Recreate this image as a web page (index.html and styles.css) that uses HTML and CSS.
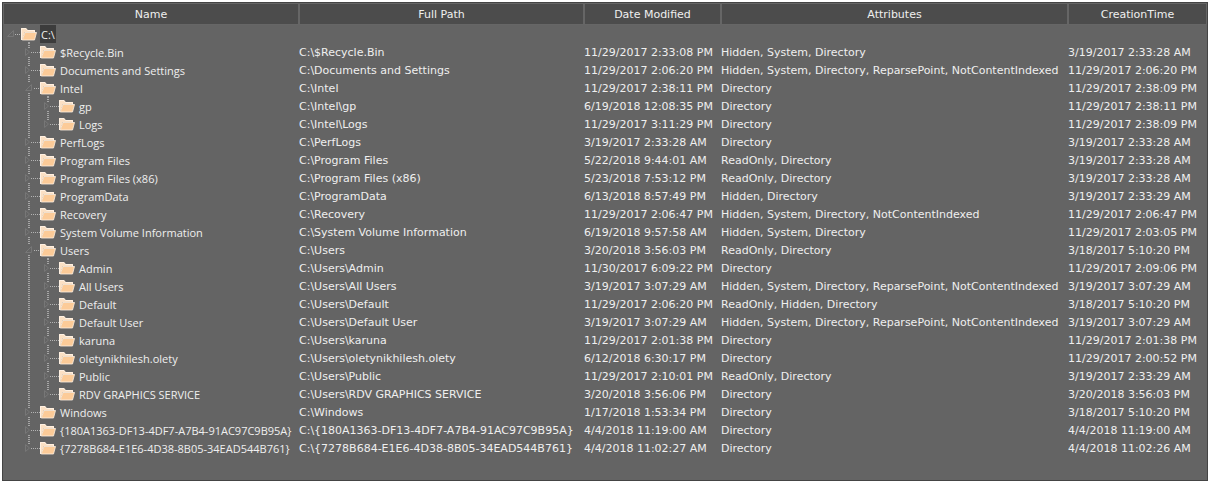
FILE: index.html
```html
<!DOCTYPE html>
<html lang="en">
<head>
<meta charset="utf-8">
<title>C:\</title>
<link rel="stylesheet" href="styles.css">
</head>
<body>
<svg class="sprites" aria-hidden="true">
  <symbol id="folder" viewBox="0 0 17 18">
    <path d="M0 3h5l1.500 2H14v2H4L1 15H0z" fill="#fbe0c4"/>
    <path d="M.5 15V3.500H5L6.500 5.500H13.500V7.500" fill="none" stroke="#fff1e2"/>
    <path d="M4 7.500H15.500L13.500 15H1.200z" fill="#fccb98" stroke="#fff1e2" stroke-width=".8"/>
  </symbol>
  <symbol id="stem" viewBox="0 0 17 18">
    <path d="M7 17.500h2" stroke="#a6a6a6"/>
  </symbol>
  <symbol id="root" viewBox="0 0 18 18">
    <path d="M4.500 11.500h6v-6z" fill="none" stroke="#777"/>
    <path d="M12 9.500h6" stroke="#b4b4b4" stroke-dasharray="1 1"/>
  </symbol>
  <symbol id="line" viewBox="0 0 19 18">
    <path d="M8 0v18" stroke="#a6a6a6" stroke-width="2" stroke-dasharray="1 1"/>
  </symbol>
  <symbol id="closed" viewBox="0 0 19 18">
    <path d="M8 0v5M8 14v4" stroke="#a6a6a6" stroke-width="2" stroke-dasharray="1 1"/>
    <path d="M4.500 5.500v7l4-3.500z" fill="none" stroke="#777"/>
    <path d="M10 9.500h9" stroke="#b4b4b4" stroke-dasharray="1 1"/>
  </symbol>
  <symbol id="last" viewBox="0 0 19 18">
    <path d="M8 0v5" stroke="#a6a6a6" stroke-width="2" stroke-dasharray="1 1"/>
    <path d="M4.500 5.500v7l4-3.500z" fill="none" stroke="#777"/>
    <path d="M10 9.500h9" stroke="#b4b4b4" stroke-dasharray="1 1"/>
  </symbol>
  <symbol id="open" viewBox="0 0 19 18">
    <path d="M8 0v4M8 14v4" stroke="#a6a6a6" stroke-width="2" stroke-dasharray="1 1"/>
    <path d="M4.500 11.500h6v-6z" fill="none" stroke="#777"/>
    <path d="M13 9.500h6" stroke="#b4b4b4" stroke-dasharray="1 1"/>
  </symbol>
</svg>
<main class="panel">
<table class="files">
<colgroup><col class="col-name"><col class="col-path"><col class="col-date"><col><col class="col-created"></colgroup>
<thead><tr><th scope="col">Name</th><th scope="col">Full Path</th><th scope="col">Date Modified</th><th scope="col">Attributes</th><th scope="col">CreationTime</th></tr></thead>
<tbody>
<tr><td><div class="node"><button class="toggle root" aria-label="Collapse C:\" aria-expanded="true"><svg><use href="#root"/></svg></button><svg class="folder"><use href="#folder"/><use href="#stem"/></svg><span class="label selected">C:\</span></div></td><td></td><td></td><td></td><td></td></tr>
<tr><td><div class="node child"><button class="toggle" aria-label="Expand $Recycle.Bin"><svg><use href="#closed"/></svg></button><svg class="folder"><use href="#folder"/></svg><span class="label">$Recycle.Bin</span></div></td><td>C:\$Recycle.Bin</td><td>11/29/2017 2:33:08 PM</td><td>Hidden, System, Directory</td><td>3/19/2017 2:33:28 AM</td></tr>
<tr><td><div class="node child"><button class="toggle" aria-label="Expand Documents and Settings"><svg><use href="#closed"/></svg></button><svg class="folder"><use href="#folder"/></svg><span class="label">Documents and Settings</span></div></td><td>C:\Documents and Settings</td><td>11/29/2017 2:06:20 PM</td><td>Hidden, System, Directory, ReparsePoint, NotContentIndexed</td><td>11/29/2017 2:06:20 PM</td></tr>
<tr><td><div class="node child"><button class="toggle" aria-label="Collapse Intel" aria-expanded="true"><svg><use href="#open"/></svg></button><svg class="folder"><use href="#folder"/><use href="#stem"/></svg><span class="label">Intel</span></div></td><td>C:\Intel</td><td>11/29/2017 2:38:11 PM</td><td>Directory</td><td>11/29/2017 2:38:09 PM</td></tr>
<tr><td><div class="node child"><svg class="guide"><use href="#line"/></svg><button class="toggle" aria-label="Expand gp"><svg><use href="#closed"/></svg></button><svg class="folder"><use href="#folder"/></svg><span class="label">gp</span></div></td><td>C:\Intel\gp</td><td>6/19/2018 12:08:35 PM</td><td>Directory</td><td>11/29/2017 2:38:11 PM</td></tr>
<tr><td><div class="node child"><svg class="guide"><use href="#line"/></svg><button class="toggle" aria-label="Expand Logs"><svg><use href="#last"/></svg></button><svg class="folder"><use href="#folder"/></svg><span class="label">Logs</span></div></td><td>C:\Intel\Logs</td><td>11/29/2017 3:11:29 PM</td><td>Directory</td><td>11/29/2017 2:38:09 PM</td></tr>
<tr><td><div class="node child"><button class="toggle" aria-label="Expand PerfLogs"><svg><use href="#closed"/></svg></button><svg class="folder"><use href="#folder"/></svg><span class="label">PerfLogs</span></div></td><td>C:\PerfLogs</td><td>3/19/2017 2:33:28 AM</td><td>Directory</td><td>3/19/2017 2:33:28 AM</td></tr>
<tr><td><div class="node child"><button class="toggle" aria-label="Expand Program Files"><svg><use href="#closed"/></svg></button><svg class="folder"><use href="#folder"/></svg><span class="label">Program Files</span></div></td><td>C:\Program Files</td><td>5/22/2018 9:44:01 AM</td><td>ReadOnly, Directory</td><td>3/19/2017 2:33:28 AM</td></tr>
<tr><td><div class="node child"><button class="toggle" aria-label="Expand Program Files (x86)"><svg><use href="#closed"/></svg></button><svg class="folder"><use href="#folder"/></svg><span class="label">Program Files (x86)</span></div></td><td>C:\Program Files (x86)</td><td>5/23/2018 7:53:12 PM</td><td>ReadOnly, Directory</td><td>3/19/2017 2:33:28 AM</td></tr>
<tr><td><div class="node child"><button class="toggle" aria-label="Expand ProgramData"><svg><use href="#closed"/></svg></button><svg class="folder"><use href="#folder"/></svg><span class="label">ProgramData</span></div></td><td>C:\ProgramData</td><td>6/13/2018 8:57:49 PM</td><td>Hidden, Directory</td><td>3/19/2017 2:33:29 AM</td></tr>
<tr><td><div class="node child"><button class="toggle" aria-label="Expand Recovery"><svg><use href="#closed"/></svg></button><svg class="folder"><use href="#folder"/></svg><span class="label">Recovery</span></div></td><td>C:\Recovery</td><td>11/29/2017 2:06:47 PM</td><td>Hidden, System, Directory, NotContentIndexed</td><td>11/29/2017 2:06:47 PM</td></tr>
<tr><td><div class="node child"><button class="toggle" aria-label="Expand System Volume Information"><svg><use href="#closed"/></svg></button><svg class="folder"><use href="#folder"/></svg><span class="label">System Volume Information</span></div></td><td>C:\System Volume Information</td><td>6/19/2018 9:57:58 AM</td><td>Hidden, System, Directory</td><td>11/29/2017 2:03:05 PM</td></tr>
<tr><td><div class="node child"><button class="toggle" aria-label="Collapse Users" aria-expanded="true"><svg><use href="#open"/></svg></button><svg class="folder"><use href="#folder"/><use href="#stem"/></svg><span class="label">Users</span></div></td><td>C:\Users</td><td>3/20/2018 3:56:03 PM</td><td>ReadOnly, Directory</td><td>3/18/2017 5:10:20 PM</td></tr>
<tr><td><div class="node child"><svg class="guide"><use href="#line"/></svg><button class="toggle" aria-label="Expand Admin"><svg><use href="#closed"/></svg></button><svg class="folder"><use href="#folder"/></svg><span class="label">Admin</span></div></td><td>C:\Users\Admin</td><td>11/30/2017 6:09:22 PM</td><td>Directory</td><td>11/29/2017 2:09:06 PM</td></tr>
<tr><td><div class="node child"><svg class="guide"><use href="#line"/></svg><button class="toggle" aria-label="Expand All Users"><svg><use href="#closed"/></svg></button><svg class="folder"><use href="#folder"/></svg><span class="label">All Users</span></div></td><td>C:\Users\All Users</td><td>3/19/2017 3:07:29 AM</td><td>Hidden, System, Directory, ReparsePoint, NotContentIndexed</td><td>3/19/2017 3:07:29 AM</td></tr>
<tr><td><div class="node child"><svg class="guide"><use href="#line"/></svg><button class="toggle" aria-label="Expand Default"><svg><use href="#closed"/></svg></button><svg class="folder"><use href="#folder"/></svg><span class="label">Default</span></div></td><td>C:\Users\Default</td><td>11/29/2017 2:06:20 PM</td><td>ReadOnly, Hidden, Directory</td><td>3/18/2017 5:10:20 PM</td></tr>
<tr><td><div class="node child"><svg class="guide"><use href="#line"/></svg><button class="toggle" aria-label="Expand Default User"><svg><use href="#closed"/></svg></button><svg class="folder"><use href="#folder"/></svg><span class="label">Default User</span></div></td><td>C:\Users\Default User</td><td>3/19/2017 3:07:29 AM</td><td>Hidden, System, Directory, ReparsePoint, NotContentIndexed</td><td>3/19/2017 3:07:29 AM</td></tr>
<tr><td><div class="node child"><svg class="guide"><use href="#line"/></svg><button class="toggle" aria-label="Expand karuna"><svg><use href="#closed"/></svg></button><svg class="folder"><use href="#folder"/></svg><span class="label">karuna</span></div></td><td>C:\Users\karuna</td><td>11/29/2017 2:01:38 PM</td><td>Directory</td><td>11/29/2017 2:01:38 PM</td></tr>
<tr><td><div class="node child"><svg class="guide"><use href="#line"/></svg><button class="toggle" aria-label="Expand oletynikhilesh.olety"><svg><use href="#closed"/></svg></button><svg class="folder"><use href="#folder"/></svg><span class="label">oletynikhilesh.olety</span></div></td><td>C:\Users\oletynikhilesh.olety</td><td>6/12/2018 6:30:17 PM</td><td>Directory</td><td>11/29/2017 2:00:52 PM</td></tr>
<tr><td><div class="node child"><svg class="guide"><use href="#line"/></svg><button class="toggle" aria-label="Expand Public"><svg><use href="#closed"/></svg></button><svg class="folder"><use href="#folder"/></svg><span class="label">Public</span></div></td><td>C:\Users\Public</td><td>11/29/2017 2:10:01 PM</td><td>ReadOnly, Directory</td><td>3/19/2017 2:33:29 AM</td></tr>
<tr><td><div class="node child"><svg class="guide"><use href="#line"/></svg><button class="toggle" aria-label="Expand RDV GRAPHICS SERVICE"><svg><use href="#last"/></svg></button><svg class="folder"><use href="#folder"/></svg><span class="label">RDV GRAPHICS SERVICE</span></div></td><td>C:\Users\RDV GRAPHICS SERVICE</td><td>3/20/2018 3:56:06 PM</td><td>Directory</td><td>3/20/2018 3:56:03 PM</td></tr>
<tr><td><div class="node child"><button class="toggle" aria-label="Expand Windows"><svg><use href="#closed"/></svg></button><svg class="folder"><use href="#folder"/></svg><span class="label">Windows</span></div></td><td>C:\Windows</td><td>1/17/2018 1:53:34 PM</td><td>Directory</td><td>3/18/2017 5:10:20 PM</td></tr>
<tr><td><div class="node child"><button class="toggle" aria-label="Expand {180A1363-DF13-4DF7-A7B4-91AC97C9B95A}"><svg><use href="#closed"/></svg></button><svg class="folder"><use href="#folder"/></svg><span class="label">{180A1363-DF13-4DF7-A7B4-91AC97C9B95A}</span></div></td><td>C:\{180A1363-DF13-4DF7-A7B4-91AC97C9B95A}</td><td>4/4/2018 11:19:00 AM</td><td>Directory</td><td>4/4/2018 11:19:00 AM</td></tr>
<tr><td><div class="node child"><button class="toggle" aria-label="Expand {7278B684-E1E6-4D38-8B05-34EAD544B761}"><svg><use href="#last"/></svg></button><svg class="folder"><use href="#folder"/></svg><span class="label">{7278B684-E1E6-4D38-8B05-34EAD544B761}</span></div></td><td>C:\{7278B684-E1E6-4D38-8B05-34EAD544B761}</td><td>4/4/2018 11:02:27 AM</td><td>Directory</td><td>4/4/2018 11:02:26 AM</td></tr>
</tbody>
</table>
</main>
</body>
</html>
```
FILE: styles.css
```css
* { box-sizing: border-box; }
body {
  margin: 0;
  padding: 2px 4px 4px 2px;
  background: #fff;
}
.sprites { display: none; }
.panel {
  padding-bottom: 23px;
  border: 1px solid #444;
  background: #646464;
  color: #efefef;
  font: 11px/16px Verdana, "DejaVu Sans", sans-serif;
}
.files {
  width: 100%;
  table-layout: fixed;
  border-collapse: separate;
  border-spacing: 0;
}
.col-name { width: 296px; }
.col-path { width: 285px; }
.col-date { width: 137px; }
.col-created { width: 139px; }
th {
  height: 22px;
  padding: 2px 0 0;
  border: 1px solid #666;
  background: #4c4c4c;
  font-weight: 400;
  text-align: center;
}
td {
  height: 18px;
  padding: 2px 0 0;
  overflow: hidden;
  white-space: nowrap;
  vertical-align: top;
}
td:first-child { padding-top: 0; }
.node {
  display: flex;
  height: 18px;
  font-family: "Open Sans", sans-serif;
}
.child { padding-left: 18px; }
.toggle {
  flex: none;
  width: 19px;
  height: 18px;
  padding: 0;
  border: 0;
  background: none;
}
.toggle.root { width: 18px; }
.toggle svg {
  display: block;
  width: 100%;
  height: 18px;
}
.guide {
  flex: none;
  width: 19px;
  height: 18px;
}
.folder {
  flex: none;
  width: 17px;
  height: 18px;
}
.label {
  margin-left: 2px;
  padding: 2px 1px 0;
}
.selected { background: #3c3c3c; }
```
